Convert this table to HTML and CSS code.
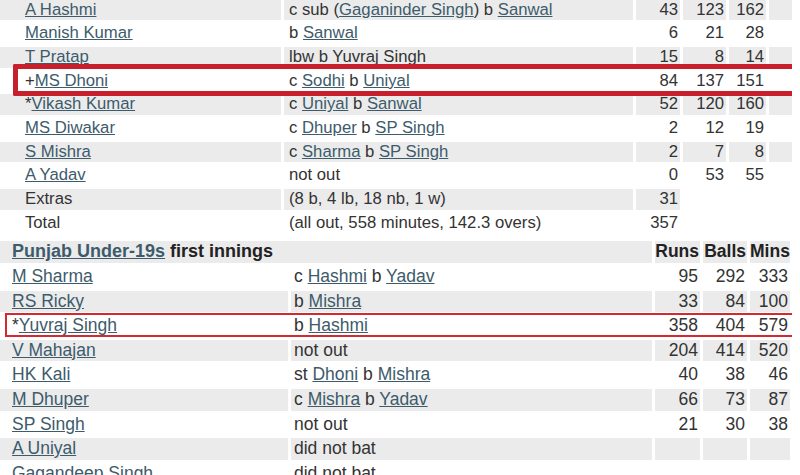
FILE: index.html
```html
<!DOCTYPE html>
<html>
<head>
<meta charset="utf-8">
<link rel="stylesheet" href="styles.css">
</head>
<body>
<div class="page">
  <div class="card top">
    <div class="row odd"><div class="name"><a href="#">A Hashmi</a></div><div class="how">c sub (<a href="#">Gaganinder Singh</a>) b <a href="#">Sanwal</a></div><div class="num">43</div><div class="num">123</div><div class="num">162</div><div class="num"></div></div>
    <div class="row"><div class="name"><a href="#">Manish Kumar</a></div><div class="how">b <a href="#">Sanwal</a></div><div class="num">6</div><div class="num">21</div><div class="num">28</div><div class="num"></div></div>
    <div class="row odd"><div class="name"><a href="#">T Pratap</a></div><div class="how">lbw b Yuvraj Singh</div><div class="num">15</div><div class="num">8</div><div class="num">14</div><div class="num"></div></div>
    <div class="row"><div class="name">+<a href="#">MS Dhoni</a></div><div class="how">c <a href="#">Sodhi</a> b <a href="#">Uniyal</a></div><div class="num">84</div><div class="num">137</div><div class="num">151</div><div class="num"></div></div>
    <div class="row odd"><div class="name">*<a href="#">Vikash Kumar</a></div><div class="how">c <a href="#">Uniyal</a> b <a href="#">Sanwal</a></div><div class="num">52</div><div class="num">120</div><div class="num">160</div><div class="num"></div></div>
    <div class="row"><div class="name"><a href="#">MS Diwakar</a></div><div class="how">c <a href="#">Dhuper</a> b <a href="#">SP Singh</a></div><div class="num">2</div><div class="num">12</div><div class="num">19</div><div class="num"></div></div>
    <div class="row odd"><div class="name"><a href="#">S Mishra</a></div><div class="how">c <a href="#">Sharma</a> b <a href="#">SP Singh</a></div><div class="num">2</div><div class="num">7</div><div class="num">8</div><div class="num"></div></div>
    <div class="row"><div class="name"><a href="#">A Yadav</a></div><div class="how">not out</div><div class="num">0</div><div class="num">53</div><div class="num">55</div><div class="num"></div></div>
    <div class="row odd"><div class="name">Extras</div><div class="how">(8 b, 4 lb, 18 nb, 1 w)</div><div class="num">31</div></div>
    <div class="row"><div class="name">Total</div><div class="how">(all out, 558 minutes, 142.3 overs)</div><div class="num">357</div></div>
    <div class="mark mark-thick"></div>
  </div>

  <div class="card bottom">
    <div class="row odd"><div class="title"><a href="#">Punjab Under-19s</a> first innings</div><div class="num head">Runs</div><div class="num head">Balls</div><div class="num head">Mins</div></div>
    <div class="row"><div class="name"><a href="#">M Sharma</a></div><div class="how">c <a href="#">Hashmi</a> b <a href="#">Yadav</a></div><div class="num">95</div><div class="num">292</div><div class="num">333</div></div>
    <div class="row odd"><div class="name"><a href="#">RS Ricky</a></div><div class="how">b <a href="#">Mishra</a></div><div class="num">33</div><div class="num">84</div><div class="num">100</div></div>
    <div class="row"><div class="name">*<a href="#">Yuvraj Singh</a></div><div class="how">b <a href="#">Hashmi</a></div><div class="num">358</div><div class="num">404</div><div class="num">579</div></div>
    <div class="row odd"><div class="name"><a href="#">V Mahajan</a></div><div class="how">not out</div><div class="num">204</div><div class="num">414</div><div class="num">520</div></div>
    <div class="row"><div class="name"><a href="#">HK Kali</a></div><div class="how">st <a href="#">Dhoni</a> b <a href="#">Mishra</a></div><div class="num">40</div><div class="num">38</div><div class="num">46</div></div>
    <div class="row odd"><div class="name"><a href="#">M Dhuper</a></div><div class="how">c <a href="#">Mishra</a> b <a href="#">Yadav</a></div><div class="num">66</div><div class="num">73</div><div class="num">87</div></div>
    <div class="row"><div class="name"><a href="#">SP Singh</a></div><div class="how">not out</div><div class="num">21</div><div class="num">30</div><div class="num">38</div></div>
    <div class="row odd"><div class="name"><a href="#">A Uniyal</a></div><div class="how">did not bat</div><div class="num"></div><div class="num"></div><div class="num"></div></div>
    <div class="row"><div class="name"><a href="#">Gagandeep Singh</a></div><div class="how">did not bat</div><div class="num"></div><div class="num"></div><div class="num"></div></div>
    <div class="mark mark-thin"></div>
  </div>
</div>
</body>
</html>
```
FILE: styles.css
```css
html, body {
  margin: 0;
  padding: 0;
  background: #ffffff;
}

.page {
  width: 792px;
  height: 475px;
  overflow: hidden;
  position: relative;
  font-family: "Liberation Sans", Arial, sans-serif;
  color: #333333;
}

a {
  color: #3d5b6b;
  text-decoration: underline;
}

.card {
  display: flex;
  flex-direction: column;
}

.top {
  font-size: 16.7px;
  gap: 3px;
  margin-top: -0.5px;
}

.bottom {
  font-size: 17.5px;
  gap: 3px;
  margin-top: 8px;
}

.row {
  display: grid;
  column-gap: 3px;
}

.top .row {
  grid-template-columns: 281px 349px 44px 43px 37px 60px;
  height: 20.7px;
  line-height: 20.7px;
}

.bottom .row {
  grid-template-columns: 288px 361px 45px 44px 40px;
  height: 21.6px;
  line-height: 21.6px;
}

.row > div {
  white-space: nowrap;
  overflow: hidden;
}

.row.odd > div {
  background: #ebebeb;
}

.top .name {
  padding-left: 25px;
}

.bottom .name,
.bottom .title {
  padding-left: 12px;
}

.top .how {
  padding-left: 5px;
}

.bottom .how {
  padding-left: 3px;
}

.title {
  grid-column: span 2;
  font-weight: bold;
  font-size: 18px;
  color: #222222;
}

.num {
  text-align: right;
  padding-right: 2px;
}

.head {
  font-weight: bold;
  color: #222222;
  padding-right: 1px;
}

.mark {
  position: absolute;
  box-sizing: border-box;
  pointer-events: none;
}

.mark-thick {
  left: 13px;
  top: 64px;
  width: 800px;
  height: 32px;
  border: 5px solid #c81f2d;
  border-right: none;
  border-radius: 2px 0 0 2px;
}

.mark-thin {
  left: 5px;
  top: 313px;
  width: 792px;
  height: 24px;
  border: 2px solid #d42a2f;
}
```
